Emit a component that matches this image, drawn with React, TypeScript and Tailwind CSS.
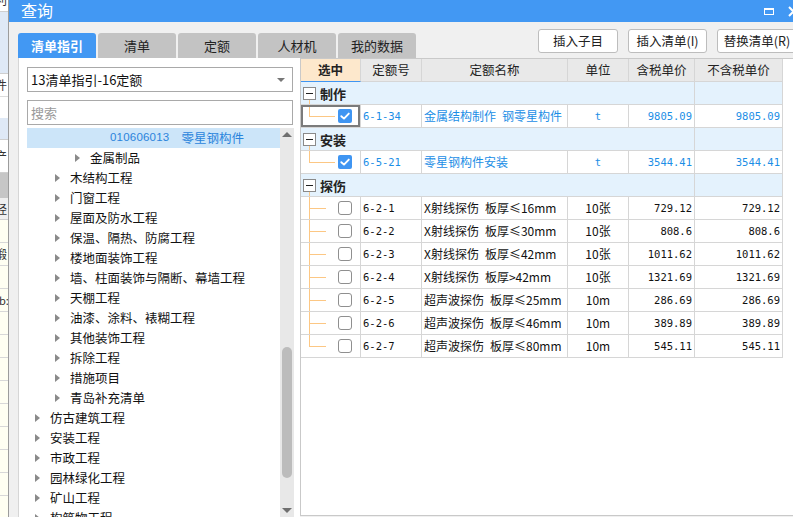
import React from "react";

const CJK = "font-['Noto_Sans_CJK_SC','Noto_Sans',sans-serif]";
const MONO = "font-['DejaVu_Sans_Mono','Liberation_Mono',monospace]";

type TreeItem = { t: string; lvl: number };
const tree: TreeItem[] = [
  { t: "金属制品", lvl: 2 },
  { t: "木结构工程", lvl: 1 },
  { t: "门窗工程", lvl: 1 },
  { t: "屋面及防水工程", lvl: 1 },
  { t: "保温、隔热、防腐工程", lvl: 1 },
  { t: "楼地面装饰工程", lvl: 1 },
  { t: "墙、柱面装饰与隔断、幕墙工程", lvl: 1 },
  { t: "天棚工程", lvl: 1 },
  { t: "油漆、涂料、裱糊工程", lvl: 1 },
  { t: "其他装饰工程", lvl: 1 },
  { t: "拆除工程", lvl: 1 },
  { t: "措施项目", lvl: 1 },
  { t: "青岛补充清单", lvl: 1 },
  { t: "仿古建筑工程", lvl: 0 },
  { t: "安装工程", lvl: 0 },
  { t: "市政工程", lvl: 0 },
  { t: "园林绿化工程", lvl: 0 },
  { t: "矿山工程", lvl: 0 },
  { t: "构筑物工程", lvl: 0 },
];

type Item = {
  code: string;
  name: string;
  unit: string;
  p1: string;
  p2: string;
  checked?: boolean;
  focus?: boolean;
  last?: boolean;
};
type Group = { label: string; items: Item[] };

const groups: Group[] = [
  {
    label: "制作",
    items: [
      { code: "6-1-34", name: "金属结构制作\u2002钢零星构件", unit: "t", p1: "9805.09", p2: "9805.09", checked: true, focus: true, last: true },
    ],
  },
  {
    label: "安装",
    items: [
      { code: "6-5-21", name: "零星钢构件安装", unit: "t", p1: "3544.41", p2: "3544.41", checked: true, last: true },
    ],
  },
  {
    label: "探伤",
    items: [
      { code: "6-2-1", name: "X射线探伤\u2002板厚≤16mm", unit: "10张", p1: "729.12", p2: "729.12" },
      { code: "6-2-2", name: "X射线探伤\u2002板厚≤30mm", unit: "10张", p1: "808.6", p2: "808.6" },
      { code: "6-2-3", name: "X射线探伤\u2002板厚≤42mm", unit: "10张", p1: "1011.62", p2: "1011.62" },
      { code: "6-2-4", name: "X射线探伤\u2002板厚>42mm", unit: "10张", p1: "1321.69", p2: "1321.69" },
      { code: "6-2-5", name: "超声波探伤\u2002板厚≤25mm", unit: "10m", p1: "286.69", p2: "286.69" },
      { code: "6-2-6", name: "超声波探伤\u2002板厚≤46mm", unit: "10m", p1: "389.89", p2: "389.89" },
      { code: "6-2-7", name: "超声波探伤\u2002板厚≤80mm", unit: "10m", p1: "545.11", p2: "545.11", last: true },
    ],
  },
];

const cell = "border-r border-b border-[#d6d6d6] h-[23px] flex items-center overflow-hidden whitespace-nowrap";

function Arrow() {
  return <span className="inline-block w-0 h-0 border-y-[4px] border-y-transparent border-l-[5px] border-l-[#8a8a8a]" />;
}

function LeftStrip() {
  return (
    <div className={`w-[8px] shrink-0 flex flex-col overflow-hidden bg-white text-[12px] leading-none text-[#333] ${CJK}`}>
      <div className="h-[12px] shrink-0 border-b border-[#cfcfcf] overflow-hidden"><span className="block -ml-[5px] -mt-[6px]">利</span></div>
      <div className="h-[62px] shrink-0 bg-[#dfe9f6] border-b border-[#cfcfcf]" />
      <div className="h-[23px] shrink-0 border-b border-[#dcdcdc] flex items-center overflow-hidden"><span className="block -ml-[5px]">件</span></div>
      <div className="h-[21px] shrink-0 bg-white" />
      <div className="h-[22px] shrink-0 bg-[#dfe9f6] border-b border-[#cfcfcf]" />
      <div className="h-[33px] shrink-0 flex items-center overflow-hidden border-b border-[#cfcfcf]"><span className="block -ml-[5px]">产</span></div>
      <div className="h-[25px] shrink-0 bg-[#c6c6c6]" />
      <div className="h-[22px] shrink-0 bg-[#efefef] border-b border-[#cfcfcf] flex items-center overflow-hidden"><span className="block -ml-[5px]">经</span></div>
      {Array.from({ length: 14 }).map((_, i) => (
        <div key={i} className="h-[23px] shrink-0 bg-[#fffff2] border-b border-[#d8d8d8] flex items-center overflow-hidden">
          {i === 1 ? <span className="block -ml-[5px]">锻</span> : null}
          {i === 3 ? <span className="block -ml-[1px] text-[11px]">b:</span> : null}
        </div>
      ))}
    </div>
  );
}

function Checkbox({ checked }: { checked?: boolean }) {
  if (checked) {
    return (
      <div className="w-[14px] h-[14px] rounded-[2px] bg-[#3f95f2] flex items-center justify-center">
        <svg width="14" height="14" viewBox="0 0 14 14">
          <path d="M3.3 7.2 L6 9.6 L10.8 4.6" stroke="white" strokeWidth="1.9" fill="none" strokeLinecap="round" strokeLinejoin="round" />
        </svg>
      </div>
    );
  }
  return <div className="w-[14px] h-[14px] rounded-[3px] border border-[#8f8f8f] bg-white" />;
}

export default function App() {
  return (
    <div className={`w-[793px] h-[517px] overflow-hidden flex bg-white ${CJK}`}>
      <LeftStrip />
      <div className="w-px shrink-0 bg-[#9c9c9c]" />
      <div className="flex-1 min-w-0 flex flex-col overflow-hidden">
        {/* Title bar */}
        <div className="h-[22px] shrink-0 bg-[#4298f3] flex items-center pl-[12px] text-white text-[16px] leading-none">
          <span className="-mt-[2px]">查询</span>
          <div className="ml-auto flex items-center gap-[14px] mr-[-6px]">
            <div className="w-[10px] h-[7px] border border-white border-t-2" />
            <svg width="11" height="11" viewBox="0 0 11 11">
              <path d="M1 1 L10 10 M10 1 L1 10" stroke="white" strokeWidth="2" />
            </svg>
          </div>
        </div>

        {/* Body */}
        <div className="flex-1 min-h-0 bg-[#f0f0f0] flex flex-col pl-[9px] pt-[7px]">
          {/* Tabs + buttons */}
          <div className="h-[29px] shrink-0 flex items-start">
            <div className="mt-[4px] flex gap-[2px] text-[13px] leading-none">
              <div className="w-[78px] h-[25px] rounded-t-[3px] bg-[#4298f3] text-white font-bold flex items-center justify-center">清单指引</div>
              {["清单", "定额", "人材机", "我的数据"].map((t) => (
                <div key={t} className="w-[78px] h-[25px] rounded-t-[3px] bg-[#c3c3c3] text-[#222] flex items-center justify-center">{t}</div>
              ))}
            </div>
            <div className="ml-[122px] flex gap-[10px] text-[12.5px] text-[#222] leading-none">
              <div className="w-[80px] h-[24px] shrink-0 bg-white border border-[#bdbdbd] rounded-[3px] flex items-center justify-center">插入子目</div>
              <div className="w-[79px] h-[24px] shrink-0 bg-white border border-[#bdbdbd] rounded-[3px] flex items-center justify-center">插入清单(I)</div>
              <div className="w-[80px] h-[24px] shrink-0 bg-white border border-[#bdbdbd] rounded-[3px] flex items-center justify-center">替换清单(R)</div>
            </div>
          </div>

          {/* Content */}
          <div className="flex-1 min-h-0 flex">
            {/* Left panel */}
            <div className="w-[282px] shrink-0 bg-white border-l border-[#d6d6d6] flex flex-col pl-[8px] pt-[9px]">
              <div className="w-[266px] h-[25px] shrink-0 border border-[#a9a9a9] flex items-center pl-[3px] pr-[7px] text-[13px] text-[#111]">
                <span>13清单指引-16定额</span>
                <span className="ml-auto w-0 h-0 border-x-[4px] border-x-transparent border-t-[4px] border-t-[#777]" />
              </div>
              <div className="mt-[8px] w-[266px] h-[25px] shrink-0 border border-[#a9a9a9] flex items-center pl-[3px] text-[13px] text-[#9a9a9a]">
                搜索
              </div>
              <div className="mt-[3px] flex-1 min-h-0 flex overflow-hidden">
                <div className="w-[253px] shrink-0 flex flex-col text-[12.5px] text-[#111] leading-none">
                  <div className="h-[20px] shrink-0 bg-[#cce5f9] flex items-center text-[#2a84dc] pl-[83px]">
                    <span className="font-['Liberation_Sans',sans-serif] text-[11.5px] tracking-[0.2px]">010606013</span>
                    <span className="ml-[12px]">零星钢构件</span>
                  </div>
                  {tree.map((r) => (
                    <div
                      key={r.t}
                      className={`h-[20px] shrink-0 flex items-center whitespace-nowrap ${r.lvl === 2 ? "pl-[48px]" : r.lvl === 1 ? "pl-[28px]" : "pl-[8px]"}`}
                    >
                      <Arrow />
                      <span className="ml-[10px]">{r.t}</span>
                    </div>
                  ))}
                </div>
                <div className="w-[14px] shrink-0 bg-[#e8e8e8] flex flex-col items-center">
                  <div className="h-[12px] shrink-0 flex items-center">
                    <span className="w-0 h-0 border-x-[5px] border-x-transparent border-b-[5px] border-b-[#6f6f6f]" />
                  </div>
                  <div className="h-[207px] shrink-0" />
                  <div className="w-[10px] h-[131px] shrink-0 rounded-full bg-[#bcbcbc]" />
                  <div className="flex-1" />
                  <div className="h-[14px] shrink-0 flex items-center">
                    <span className="w-0 h-0 border-x-[5px] border-x-transparent border-t-[5px] border-t-[#6f6f6f]" />
                  </div>
                </div>
              </div>
            </div>

            {/* Right panel */}
            <div className="flex-1 min-w-0 bg-white border-l border-t border-b border-[#c9c9c9] mb-px">
              <div className="grid grid-cols-[60px_61px_146px_61px_66px_88px] w-[482px] text-[12.5px] leading-none">
                {/* Header */}
                <div className={`${cell} justify-center bg-[#fde8cc] font-bold text-[#222] border-b-[#3f95f2]`}>选中</div>
                {["定额号", "定额名称", "单位", "含税单价", "不含税单价"].map((h) => (
                  <div key={h} className={`${cell} justify-center bg-[#e9e9e9] text-[#222]`}>{h}</div>
                ))}

                {groups.map((g) => (
                  <React.Fragment key={g.label}>
                    <div className={`${cell} col-span-5 bg-[#e4f2fd] relative pl-[2px]`}>
                      <div className="w-[13px] h-[13px] shrink-0 border border-[#8a8a8a] bg-white flex items-center justify-center">
                        <div className="w-[7px] h-px bg-[#222]" />
                      </div>
                      <span className="ml-[4px] font-bold text-[13px] text-[#222]">{g.label}</span>
                      <span className="absolute left-[8px] top-[18px] bottom-0 w-px bg-[#fcc784]" />
                    </div>
                    <div className={`${cell} bg-[#e4f2fd]`} />
                    {g.items.map((it) => {
                      const color = it.checked ? "text-[#1b8ee6]" : "text-[#111]";
                      return (
                        <React.Fragment key={it.code}>
                          <div className={`${cell} relative`}>
                            <span className={`absolute left-[8px] top-0 w-px bg-[#fcc784] ${it.last ? "h-[11px]" : "h-full"}`} />
                            <span className={`absolute left-[8px] top-[11px] h-px bg-[#fcc784] ${it.checked ? "w-[26px]" : "w-[17px]"}`} />
                            <div className="ml-[37px]">
                              <Checkbox checked={it.checked} />
                            </div>
                            {it.focus ? <span className="absolute inset-0 border-2 border-[#7b7b7b]" /> : null}
                          </div>
                          <div className={`${cell} pl-[2px] ${MONO} text-[10.5px] ${color}`}>{it.code}</div>
                          <div className={`${cell} pl-[2px] text-[12px] ${color}`}>{it.name}</div>
                          <div className={`${cell} justify-center ${color} ${it.checked ? `${MONO} text-[10.5px]` : "text-[12px]"}`}>{it.unit}</div>
                          <div className={`${cell} justify-end pr-[2px] ${MONO} text-[10.5px] ${color}`}>{it.p1}</div>
                          <div className={`${cell} justify-end pr-[2px] ${MONO} text-[10.5px] ${color}`}>{it.p2}</div>
                        </React.Fragment>
                      );
                    })}
                  </React.Fragment>
                ))}
              </div>
            </div>
          </div>
        </div>
      </div>
    </div>
  );
}
